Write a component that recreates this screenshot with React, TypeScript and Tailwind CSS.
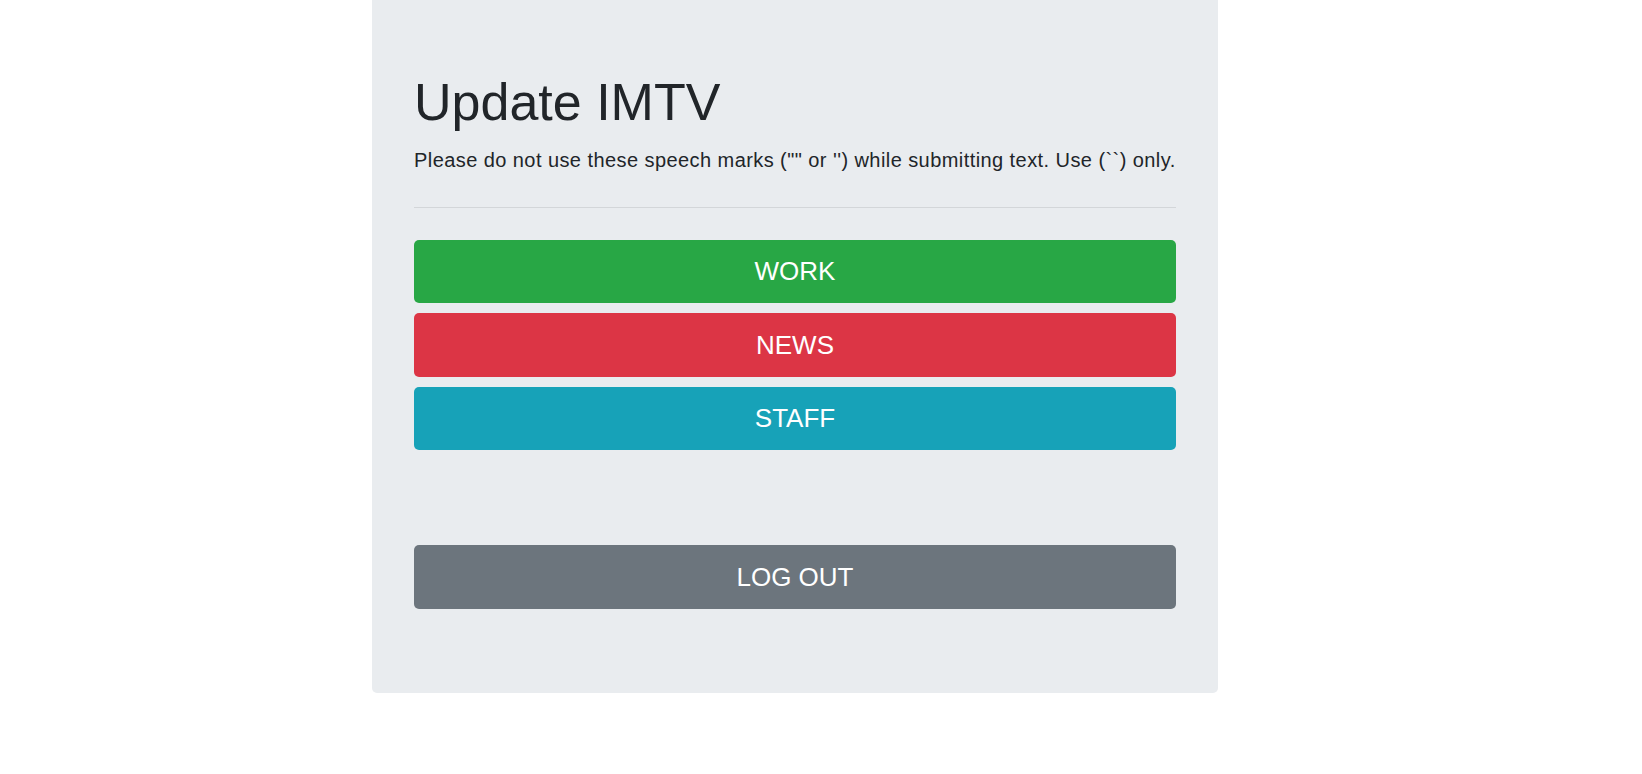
import React from "react";

const buttons = [
  { label: "WORK", cls: "bg-[#28a745]" },
  { label: "NEWS", cls: "bg-[#dc3545]" },
  { label: "STAFF", cls: "bg-[#17a2b8]" },
];

export default function App() {
  return (
    <div
      className="min-h-[774px] w-full bg-white"
      style={{ fontFamily: '"Liberation Sans", Arial, sans-serif' }}
    >
      <div className="ml-[372px] w-[846px] bg-[#e9ecef] rounded-b-[5px] px-[42px] pt-[71px] pb-[84px]">
        <h1 className="text-[52px] leading-[1.2] font-normal text-[#212529] mb-[11.6px]">
          Update IMTV
        </h1>
        <p className="text-[20px] leading-[30px] tracking-[0.43px] text-[#212529]">
          Please do not use these speech marks ("" or '') while submitting text. Use (``) only.
        </p>
        <hr className="my-[32px] border-0 border-t border-[#d3d6d9]" />
        <div className="flex flex-col gap-[10px]">
          {buttons.map((b) => (
            <button
              key={b.label}
              className={`${b.cls} h-[63.5px] w-full rounded-[5px] text-white text-[26px] flex items-center justify-center`}
            >
              {b.label}
            </button>
          ))}
        </div>
        <button className="mt-[95px] bg-[#6c757d] h-[64px] w-full rounded-[5px] text-white text-[26px] flex items-center justify-center">
          LOG OUT
        </button>
      </div>
    </div>
  );
}
